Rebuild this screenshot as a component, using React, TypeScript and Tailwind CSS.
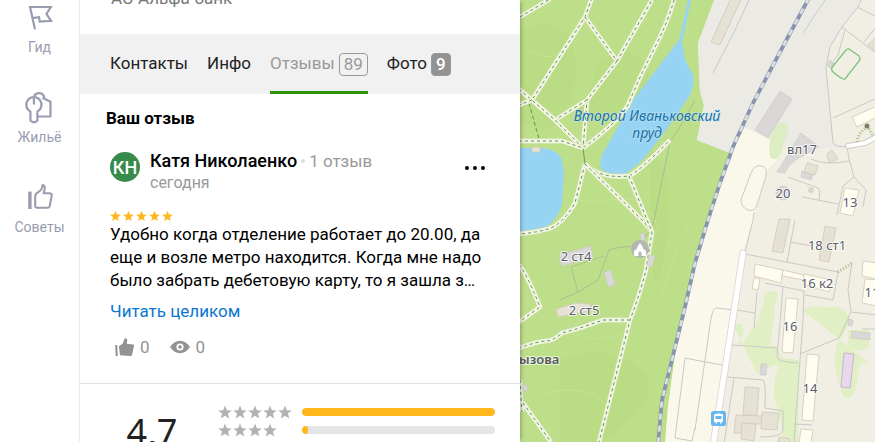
import React from 'react';
import clsx from 'clsx';

const GuideIcon = () => (
  <svg viewBox="22 -1 36 36" className="h-9 w-9" fill="none" stroke="currentColor" strokeWidth="2.2">
    <path d="M29.8 6 35 29.2M29.8 7h21l-4.3 7 4.6 6.8-11.4.8-.6-4.4-6.9.9" />
  </svg>
);

const HousingIcon = () => (
  <svg viewBox="22 89 36 36" className="h-9 w-9" fill="none" stroke="currentColor" strokeWidth="2.2">
    <path d="M31.400 111.400a7.600 7.600 0 1 1 7 0v9.200l-2.200 1.600h-2.400l-2.400-1.600zM34.900 98.600v5.800" strokeLinejoin="round" />
    <path d="M35 96.400a5.400 5.400 0 0 1 10.300 1.200M43.400 97.700l8.100 4.100v14.700H39" strokeLinejoin="round" />
  </svg>
);

const TipsIcon = () => (
  <svg viewBox="22 179 36 36" className="h-9 w-9" fill="none" stroke="currentColor" strokeWidth="2.1">
    <path d="M29.9 191.6V209" strokeWidth="3.4" />
    <path
      d="M35.2 196.2q0-1.6 1.2-2.6l4.4-3.6q1-1 1.3-2.6l.5-2.4 1.7.9q.9 1.5.4 3.3l-1.1 4h6.1q2.3.3 2 2.5l-2 10.3q-.5 1.800-2.300 1.800H36.700q-1.500-.3-1.500-2z"
      strokeLinejoin="round"
    />
  </svg>
);

const Star = ({ className }: { className: string }) => (
  <svg viewBox="0 0 24 24" className={className} fill="currentColor">
    <path d="M12 .8 15.2 8.900 23.600 9.300 17 14.700 19.300 23 12 18.300 4.700 23 7 14.700.4 9.300 8.800 8.900z" />
  </svg>
);

const LikeIcon = () => (
  <svg viewBox="0 0 20 20" className="h-5 w-5" fill="currentColor">
    <path d="M1.200 8h2l.6 11H1.700zM4.900 9.200 8.600 6.800 10.600 1.600q2.200-.9 2.700 1.300l-.5 3.800 6.400.7q.9.3.8 1.400l-1.900 9q-.3 1.400-1.600 1.300L6 18.300z" />
  </svg>
);

const EyeIcon = () => (
  <svg viewBox="0 0 20 20" className="h-5 w-5" fill="currentColor" fillRule="evenodd">
    <path d="M0 10Q4.500 3.800 10 3.800T20 10Q15.500 16.200 10 16.200T0 10zM10 6.400a3.600 3.600 0 1 0 0 7.200 3.600 3.600 0 1 0 0-7.200z" />
    <circle cx="10" cy="10" r="1.800" />
  </svg>
);

const navItems = [
  { label: 'Гид', icon: GuideIcon },
  { label: 'Жильё', icon: HousingIcon },
  { label: 'Советы', icon: TipsIcon },
];

const tabs = [
  { label: 'Контакты' },
  { label: 'Инфо' },
  { label: 'Отзывы', count: 89, active: true },
  { label: 'Фото', count: 9 },
];

const ratings = [
  { stars: 5, percent: 100 },
  { stars: 4, percent: 3 },
  { stars: 3, percent: 0 },
];

// Park alleys, drawn as a pale band with a dashed centre line
const alleys = [
  'M520 17 550-1',
  'M592-2 585 17 532 100',
  'M585 17 617 61 652 0',
  'M617 61 587 100 583 148',
  'M674 0Q668 22 654 49T628 105Q618 122 583 148',
  'M587 100 555 120',
  'M519 89 555 120 583 148',
  'M532 100 519 105',
  'M519 141H562L583 148',
  'M585 164Q600 179 629 176 640 171 670 140',
  'M585 164 575 203Q562 225 548 229T519 234',
  'M585 164 643 221 652 232',
  'M629 176 652 232 646 270Q640 294 630 320L599 442',
  'M519 265Q526 272 540 307L519 322',
  'M630 320H603L580 328 562 333Q553 341 546 341T519 348',
  'M520 380 522 412M523 403 551 442',
];

const creamBuildings = [
  '755,264 783,270 781,283 754,276',
  '754,278 760,279 758,290 752,289',
  '783,270 804,275 804,280 782,276',
  '804,274 832,280 829,292 803,284',
  '786,298 798,299 793,353 782,352',
  '807,354 819,355 813,421 802,420',
  '801,429 813,430 811,443 799,443',
  '863,261 877,263 877,279 862,276',
  '865,279 877,280 877,306 862,303',
  '845,188 859,190 853,216 840,213',
  '852,117 877,106 877,117 857,127',
];

const beigeBuildings = [
  '733,-6 742,-3 720,45 711,42',
  '779,219 790,219 783,253 772,251',
  '825,226 836,228 829,262 819,260',
  '807,163 818,166 815,175 804,172',
  '832,150 838,159 829,163 827,154',
  '877,36 868,45 877,53',
  '745,387 759,388 757,415 743,415',
  '736,415 762,416 761,424 752,424 752,433 734,433',
  '762,412 779,413 777,430 761,429',
  '742,423 756,424 754,441 741,439',
  '779,437 790,439 789,444 778,443',
  '556,309 576,303 591,304 589,311 558,317',
];

const greyBuildings = [
  '780,91 792,99 768,138 755,130',
  '801,133 819,147 799,158Q790,162 785,173 L777,172',
  '559,255 591,246 593,257 562,266',
  '604,272 611,270 615,285 608,287',
  '640,234 644,233 645,240 641,241',
  '649,255 655,256 652,267 647,266',
  '802,171 813,174 811,180 801,177',
  '761,364 767,364 766,375 760,375',
  '852,331 870,333 870,340 851,338',
  '848,319 853,320 852,326 848,325',
  '830,60 835,64 831,69 827,65',
  '523,385 527,385 527,391 523,391',
];

const mapLabels = [
  { x: 802, y: 154, text: 'вл17' },
  { x: 783, y: 198, text: '20' },
  { x: 850, y: 207, text: '13' },
  { x: 827, y: 250, text: '18 ст1' },
  { x: 817, y: 288, text: '16 к2' },
  { x: 790, y: 331, text: '16' },
  { x: 810, y: 393, text: '14' },
  { x: 872, y: 297, text: '11' },
  { x: 576, y: 261, text: '2 ст4' },
  { x: 584, y: 315, text: '2 ст5' },
];

const railway =
  'M809-2 788 37 753 103 733 147 720 183 708 220 695 263 685 307Q672 360 662 400L658 444';

const CityMap = () => (
  <svg
    viewBox="520 0 355 442"
    preserveAspectRatio="xMinYMin slice"
    className="block h-full w-full"
    fontFamily="'Noto Sans', sans-serif"
    fill="none"
  >
    {/* Park */}
    <path d="M500-20H900V460H500z" fill="#bddf89" />
    <path d="M520 30Q570 10 575 60T545 130L520 120zM600 60Q640 40 650 75T610 120 590 90zM560 360Q610 340 640 370T600 442H560zM640 140Q680 160 665 250T650 170z" fill="#b9dc84" />
    <path d="M535 170Q570 210 610 200T660 235M525 300Q570 350 620 335M540 395Q590 380 610 410M660 300Q680 240 690 220M530 50Q560 70 572 30" stroke="#c5e495" />

    {/* Ponds */}
    <path d="M514 148H543Q560 151 562 160L564 172 562 205Q556 222 545 227T514 232z" fill="#97d4f4" />
    <path d="M678 41Q682 40 683 48 684 62 693 74 695 84 690 95 668 129 649 152 637 168 622 175 607 178 601 168 599 162 603 153L634 99z" fill="#97d4f4" />
    <path d="M680 44 690-2" stroke="#97d4f4" strokeWidth="3" />

    {/* Town and railway land */}
    <path d="M715-2 698 43 700 92 704 105 697 140 730 153 720 183 708 220 695 263 678 333 668 407 665 444H877V-2z" fill="#f1efe3" />
    <path d="M730 153 743 127 768 138 777 160 768 170 753 220 743 252 712 444H665L668 407 678 333 695 263 708 220z" fill="#faf8ea" />
    <path d="M715-2 698 43 700 92 704 105 697 140 730 153 743 127 790 148 842 149 833 143 826 68 830 47 842 27 858 7 862-2z" fill="#ebeae4" />
    <path d="M780 123Q790 121 788 131L780 155Q776 161 771 158 768 152 770 142 772 126 780 123z" fill="#dcedc2" />
    <g fill="#e0efc4">
      <path d="M765 293Q779 288 778 296 773 306 775 315L770 345H750L742 343 752 330Q761 318 765 293z" />
      <path d="M733 324 742 324 744 332 738 344 777 346 782 358 799 360 798 442H782Q783 422 774 397 773 378 779 365 770 365 757 374 740 380L727 375z" />
      <path d="M802 310Q815 303 826 308 845 303 850 320 846 332 838 342 834 352 835 365 838 385 844 397 855 402 858 375 858 362 868 362 877 366V419L835 420Q815 425 816 442H799L800 353z" />
      <path d="M848 330H869V347Q858 354 848 347z" />
    </g>

    {/* Footways and boundaries */}
    <g stroke="#c9c9c7">
      <path d="M749 0 735 30 713 73M825 0 803 33M862-2 858 7 842 27 830 47 826 68 833 143Q838 148 847 146L849 159 854 177 843 186 837 215M854 177 866 190 863 207M857 7 875 16M842 27 877 54M864 42 877 26M845 30 838 55 833 61M833 118 877 98M811 159Q826 166 849 161" />
      <path d="M761 166Q768 166 766 176L757 205Q755 212 748 210 741 207 741 200L751 173Q755 164 761 166zM788 177 818 188Q821 191 819 200M802 197 838 204M754 212 753 220 745 252" />
      <path d="M745 254 838 272 833 300 805 295M795 220 787 262M790 242 812 246M852 263 848 290 851 312 839 338 800 354M851 312 877 315M765 283 804 291 803 320 794 442M783 287 777 357Q777 362 798 363M757 292 754 328M737 310 755 313M732 345 777 348M794 424 812 425M695 360 722 365M735 310 716 308Q712 309 710 325L695 430M728 377 763 380Q766 381 765 408L783 411 783 430Q783 437 760 437M734 378 724 444M862 329H877" />
      <path d="M695 100Q682 125 670 142L653 225 640 246Q615 247 609 250L598 280 578 292 560 300M604 256 571 267 578 292" stroke="#acbf91" />
      <path d="M695 360 685 358 675 438 692 441 695 428" />
    </g>
    <path d="M529 103 539 139" stroke="#569e4f" strokeDasharray="4 2.500" />
    <path d="M583 148 585 164" stroke="#75965f" />

    {/* Roads */}
    <path d="M743 253 724 376 713 446" stroke="#d5d3cf" strokeWidth="7" strokeLinecap="round" />
    <path d="M743 253 724 376 713 446" stroke="#fff" strokeWidth="5.500" strokeLinecap="round" />
    <path d="M848 146 865 143 880 135" stroke="#cccac8" strokeWidth="6" strokeLinecap="round" />
    <path d="M848 146 865 143 880 135" stroke="#fff" strokeWidth="4" strokeLinecap="round" />
    <path d="M857 142Q858 132 868 127 871 132 873 136M838 272 852 263" stroke="#a9b884" strokeWidth="3" strokeDasharray="1 2" />
    <circle cx="867" cy="126" r="2.500" fill="#7d8168" />

    {alleys.map((d) => (
      <g key={d} strokeLinejoin="round">
        <path d={d} stroke="#cadfa3" strokeWidth="5.500" />
        <path d={d} stroke="#f4f4e2" strokeWidth="4.300" />
        <path d={d} stroke="#519950" strokeWidth="1" strokeDasharray="3 3" />
      </g>
    ))}

    {/* Buildings */}
    <g fill="#d9d8d6" stroke="#cccac8" strokeWidth=".7">
      {greyBuildings.map((p) => <path key={p} d={`M${p}z`} />)}
      <circle cx="811" cy="190" r="2.500" />
      <circle cx="783" cy="193" r="7" />
    </g>
    <g fill="#e6e1d5" stroke="#d0c8b8" strokeWidth=".8">
      {beigeBuildings.map((p) => <path key={p} d={`M${p}z`} />)}
      <path d="M532 147H540V152H532z" />
    </g>
    <g fill="#fffdf0" stroke="#d6ccbb" strokeWidth=".9">
      {creamBuildings.map((p) => <path key={p} d={`M${p}z`} />)}
    </g>
    <path d="M844 353 854 354 850 388 841 387z" fill="#e8d8ec" stroke="#cdb4d4" />
    <path d="M849 49 859 56Q861 59 859 61L845 79Q842 80 832 71 831 68 833 66L846 50Q848 48 849 49z" stroke="#82c27f" strokeWidth="1.300" />

    {/* Railway */}
    <path d={railway} stroke="#8796ae" strokeWidth="3.800" />
    <path d={railway} stroke="#dcdfe2" strokeWidth="2.800" strokeDasharray="6 6" />

    {/* Chapel */}
    <circle cx="640" cy="249" r="9" fill="#b5b5b3" />
    <path d="M640 243 642 245.500 643 248.500 646 251V256H641.500V252.500Q640 250.500 638.500 252.500V256H634V251L637 248.500 638 245.500z" fill="#fff" />

    {/* Bus stop */}
    <rect x="711" y="411" width="15" height="15" rx="2.500" fill="#68b6ee" />
    <path d="M714 414.500Q718.500 412.500 723 414.500V422H721.500V423.500H720V422H717V423.500H715.500V422H714zM715.500 416V419H721.500V416z" fill="#fff" fillRule="evenodd" />

    <g fill="#5c5e68" stroke="#fff" strokeWidth="2" strokeOpacity=".8" paintOrder="stroke" textAnchor="middle" fontSize="13">
      {mapLabels.map((l) => (
        <text key={l.text} x={l.x} y={l.y}>{l.text}</text>
      ))}
    </g>
    <text x="519" y="364" fill="#555a5e" stroke="#fff" strokeWidth="2" strokeOpacity=".7" paintOrder="stroke" fontSize="13" fontWeight="600">
      ызова
    </text>
    <text fill="#2270a8" stroke="#c6e9f3" strokeWidth="1.500" strokeOpacity=".6" paintOrder="stroke" textAnchor="middle" fontSize="14" fontStyle="italic">
      <tspan x="647" y="121">Второй Иваньковский</tspan>
      <tspan x="647" y="138">пруд</tspan>
    </text>
  </svg>
);

const Sidebar = () => (
  <nav className="flex w-20 shrink-0 flex-col items-center gap-8 border-r border-[#ececec] text-[#9a9cb0]">
    {navItems.map(({ label, icon: Icon }) => (
      <a key={label} href="#" className="-mt-px flex flex-col items-center gap-0.5 pb-px">
        <Icon />
        <span className="text-[14px] leading-5">{label}</span>
      </a>
    ))}
  </nav>
);

const Tabs = () => (
  <div role="tablist" className="flex h-[60px] gap-[19px] bg-[#f1f1f1] px-[30px] text-[17px] text-[#222]">
    {tabs.map(({ label, count, active }) => (
      <button
        key={label}
        role="tab"
        aria-selected={!!active}
        className={clsx(
          'flex items-center gap-1 border-y-3 border-transparent',
          active && 'border-b-[#2b9400] text-[#999]',
        )}
      >
        {label}
        {count && (
          <span
            className={clsx(
              'rounded border border-[#999] px-1 leading-[21px]',
              !active && 'bg-[#929292] font-medium text-white',
            )}
          >
            {count}
          </span>
        )}
      </button>
    ))}
  </div>
);

const Review = () => (
  <section className="border-b border-[#e0e0e0] pt-3 pb-6 pl-[26px] text-[17px]">
    <h2 className="leading-6 font-bold text-black">Ваш отзыв</h2>
    <article className="pt-5 pr-[35px] pl-1">
      <header className="flex items-start">
        <div className="mt-0.5 mr-2.5 flex h-[30px] w-[30px] items-center justify-center rounded-full bg-[#378c4b] text-[18px] font-medium text-white">
          КН
        </div>
        <div className="leading-[22px]">
          <p className="flex items-center text-[#999]">
            <span className="text-[18px] font-medium text-black">Катя Николаенко</span>
            <span className="mx-1 h-1 w-1 rounded-full bg-[#ddd]" />
            1 отзыв
          </p>
          <p className="text-[16px] text-[#999]">сегодня</p>
        </div>
        <button aria-label="Ещё" className="mt-4 ml-auto flex gap-1">
          <span className="h-1 w-1 rounded-full bg-black" />
          <span className="h-1 w-1 rounded-full bg-black" />
          <span className="h-1 w-1 rounded-full bg-black" />
        </button>
      </header>
      <div className="mt-4 flex gap-0.5 text-[#ffb71c]">
        {[1, 2, 3, 4, 5].map((n) => <Star key={n} className="h-3 w-[11px]" />)}
      </div>
      <p className="mt-px leading-[23px] text-black">
        Удобно когда отделение работает до 20.00, да еще и возле метро находится. Когда мне надо
        было забрать дебетовую карту, то я зашла з…
      </p>
      <a href="#" className="mt-[7px] block leading-6 text-[#0a78cf]">Читать целиком</a>
      <div className="mt-3 flex gap-5 pl-1 leading-6 text-[#929292]">
        <button className="flex items-center gap-1.5" aria-label="Нравится"><LikeIcon />0</button>
        <span className="flex items-center gap-1.5"><EyeIcon />0</span>
      </div>
    </article>
  </section>
);

const Summary = () => (
  <section className="flex pt-[19px] pr-[25px]">
    <p className="w-[138px] shrink-0 pt-1 pl-1.5 text-center font-['Noto_Sans',sans-serif] text-[36px] leading-[50px] text-[#222]">
      4,7
    </p>
    <ul className="flex-1">
      {ratings.map(({ stars, percent }) => (
        <li key={stars} className="flex h-[18px] items-center">
          <span className="flex w-21 gap-px text-[#b2b2b2]">
            {Array.from({ length: stars }, (_, i) => <Star key={i} className="h-3.5 w-3.5" />)}
          </span>
          <span className="h-2 flex-1 overflow-hidden rounded bg-[#e5e5e5]">
            <span className="block h-full rounded-sm bg-[#ffb71c]" style={{ width: `${percent}%` }} />
          </span>
        </li>
      ))}
    </ul>
  </section>
);

export default function App() {
  return (
    <div className="flex h-screen overflow-hidden bg-white font-['Roboto',sans-serif]">
      <Sidebar />
      <main className="z-10 w-[440px] shrink-0 bg-white shadow-[3px_0_4px_-2px_rgba(0,0,0,0.3)]">
        <div className="flex h-[34px] items-start px-[31px]">
          <p className="-mt-3.5 text-[17px] leading-6 text-[#777]">АО Альфа-банк</p>
        </div>
        <Tabs />
        <Review />
        <Summary />
      </main>
      <div className="min-w-0 flex-1">
        <CityMap />
      </div>
    </div>
  );
}
